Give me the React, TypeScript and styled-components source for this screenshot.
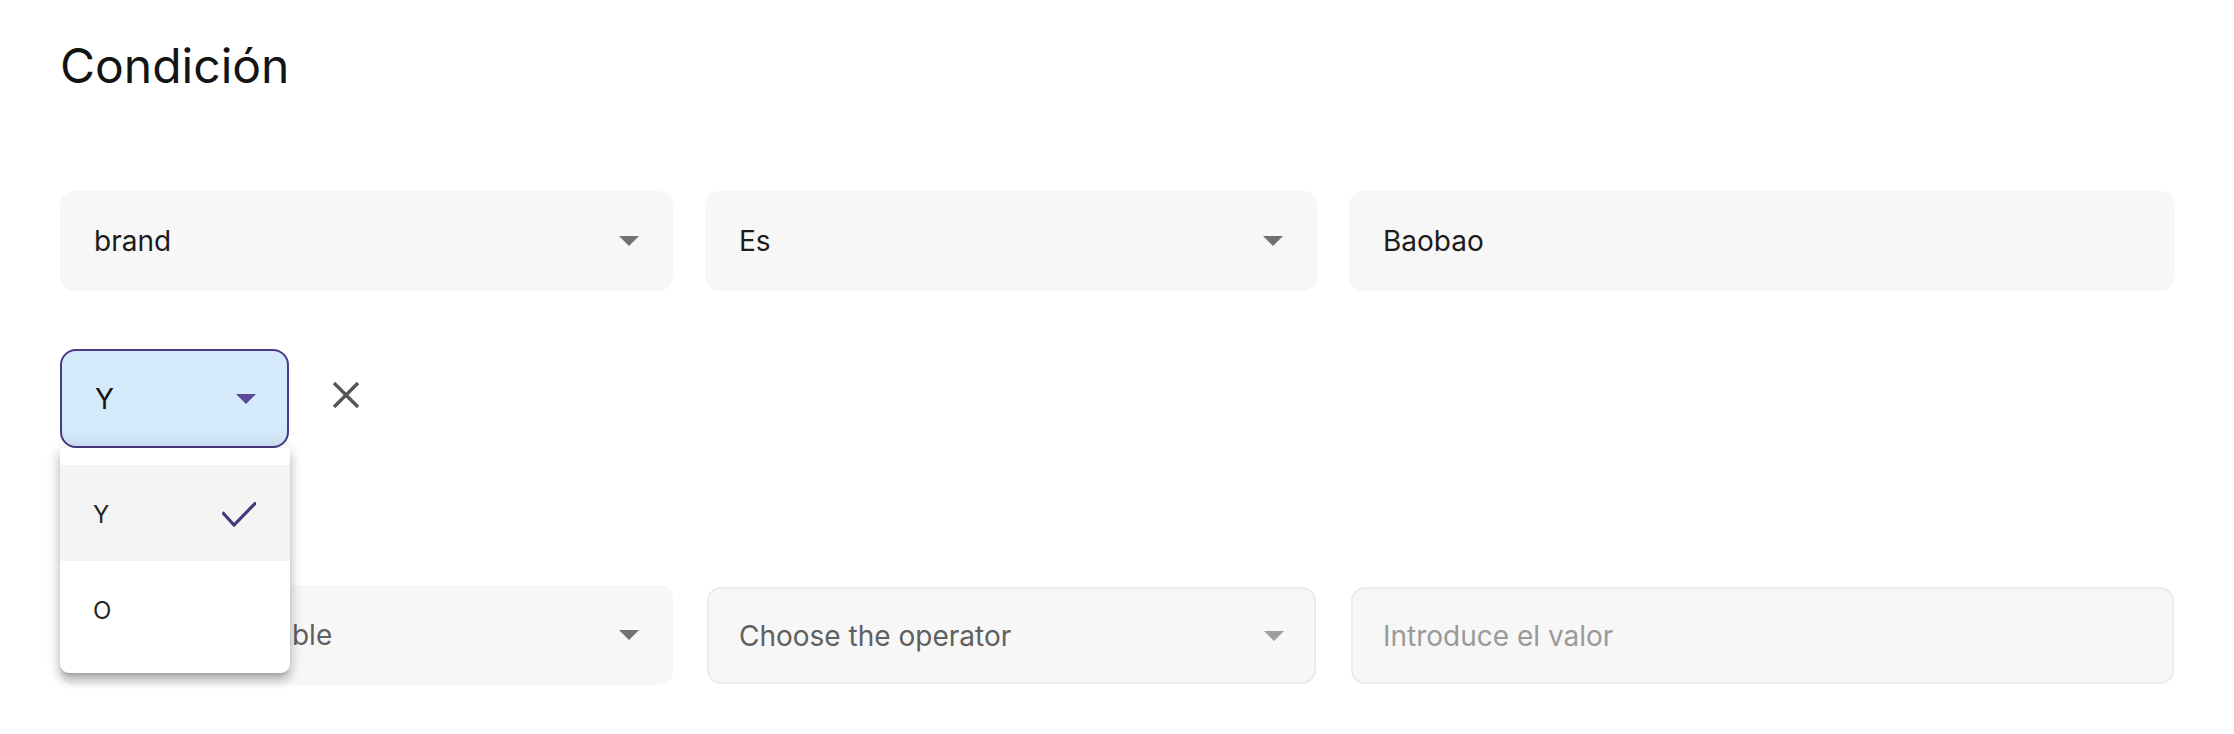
import React from "react";
import styled, { createGlobalStyle } from "styled-components";

const GlobalStyle = createGlobalStyle`
  html, body { margin: 0; padding: 0; background: #ffffff; }
  body { font-family: Inter, "Noto Sans", "Liberation Sans", sans-serif; }
  * { box-sizing: border-box; }
`;

const Page = styled.div`
  padding: 37px 59px 0 60px;
  width: 2234px;
  height: 734px;
  overflow: hidden;
`;

const Title = styled.h1`
  margin: 0;
  font-size: 48px;
  line-height: 58px;
  font-weight: 400;
  color: #141414;
  letter-spacing: 0;
`;

const FieldRow = styled.div<{ $top: number }>`
  display: grid;
  grid-template-columns: 613px 612px 1fr;
  column-gap: 32px;
  align-items: start;
  margin-top: ${(p) => p.$top}px;
`;

const Field = styled.div<{ $bordered?: boolean; $tone?: "value" | "muted" | "placeholder" }>`
  height: ${(p) => (p.$bordered ? "97px" : "100px")};
  margin: ${(p) => (p.$bordered ? "2px 1px 1px 2px" : "0")};
  border-radius: 14px;
  background: #f7f7f7;
  border: ${(p) => (p.$bordered ? "2px solid #ebebeb" : "2px solid transparent")};
  padding: 0 ${(p) => (p.$bordered ? "30px" : "32px")};
  display: flex;
  align-items: center;
  justify-content: space-between;
  font-size: 28px;
  color: ${(p) =>
    p.$tone === "muted" ? "#5f5f5f" : p.$tone === "placeholder" ? "#9a9a9a" : "#1b1b1b"};
`;

const Arrow = styled.span<{ $color: string }>`
  width: 0;
  height: 0;
  border-left: 10px solid transparent;
  border-right: 10px solid transparent;
  border-top: 10px solid ${(p) => p.$color};
  flex: none;
`;

const LogicRow = styled.div`
  display: flex;
  align-items: center;
  margin-top: 58px;
  position: relative;
  height: 99px;
`;

const SelectWrap = styled.div`
  position: relative;
  width: 229px;
  height: 99px;
`;

const LogicSelect = styled.div`
  width: 100%;
  height: 100%;
  border: 2px solid #483a86;
  border-radius: 16px;
  background: linear-gradient(180deg, #d5eafb 0%, #d5eafb 80%, #cde2f4 100%);
  display: flex;
  align-items: center;
  justify-content: space-between;
  padding: 0 31px 0 33px;
  font-size: 28px;
  color: #161616;
`;

const Menu = styled.ul`
  position: absolute;
  top: 100%;
  left: 0;
  width: 230px;
  margin: 0;
  padding: 17px 0 16px;
  list-style: none;
  background: #ffffff;
  border-radius: 0 0 9px 9px;
  box-shadow: 0 5px 5px -3px rgba(0, 0, 0, 0.2), 0 8px 10px 1px rgba(0, 0, 0, 0.14),
    0 3px 14px 2px rgba(0, 0, 0, 0.12);
  z-index: 10;
`;

const MenuItem = styled.li<{ $selected?: boolean }>`
  height: 96px;
  display: flex;
  align-items: center;
  justify-content: space-between;
  padding: 2px 34px 0 33px;
  font-size: 24px;
  color: #262626;
  background: ${(p) => (p.$selected ? "#f4f4f4" : "transparent")};
`;

const IconButton = styled.button`
  width: 48px;
  height: 48px;
  margin-left: 33px;
  margin-bottom: 7px;
  padding: 0;
  border: none;
  background: transparent;
  display: flex;
  align-items: center;
  justify-content: center;
  cursor: pointer;
`;

const CheckIcon = () => (
  <svg width="34" height="25" viewBox="0 0 34 25" fill="none">
    <polyline points="1.5,11.5 12,23 33,1.5" stroke="#46387f" strokeWidth="3.2" strokeLinecap="square" />
  </svg>
);

const CloseIcon = () => (
  <svg width="28" height="28" viewBox="0 0 28 28" fill="none">
    <line x1="2" y1="2" x2="26" y2="26" stroke="#555555" strokeWidth="3.4" />
    <line x1="26" y1="2" x2="2" y2="26" stroke="#555555" strokeWidth="3.4" />
  </svg>
);

export default function App() {
  return (
    <>
      <GlobalStyle />
      <Page>
        <Title>Condición</Title>

        <FieldRow $top={96}>
          <Field>
            <span>brand</span>
            <Arrow $color="#717171" />
          </Field>
          <Field>
            <span>Es</span>
            <Arrow $color="#717171" />
          </Field>
          <Field>
            <span>Baobao</span>
          </Field>
        </FieldRow>

        <LogicRow>
          <SelectWrap>
            <LogicSelect>
              <span>Y</span>
              <Arrow $color="#5a4a96" />
            </LogicSelect>
            <Menu>
              <MenuItem $selected>
                <span>Y</span>
                <CheckIcon />
              </MenuItem>
              <MenuItem>
                <span>O</span>
              </MenuItem>
            </Menu>
          </SelectWrap>
          <IconButton aria-label="Eliminar">
            <CloseIcon />
          </IconButton>
        </LogicRow>

        <FieldRow $top={137}>
          <Field $tone="muted">
            <span>Choose a variable</span>
            <Arrow $color="#717171" />
          </Field>
          <Field $bordered $tone="muted">
            <span>Choose the operator</span>
            <Arrow $color="#9e9e9e" />
          </Field>
          <Field $bordered $tone="placeholder">
            <span>Introduce el valor</span>
          </Field>
        </FieldRow>
      </Page>
    </>
  );
}
